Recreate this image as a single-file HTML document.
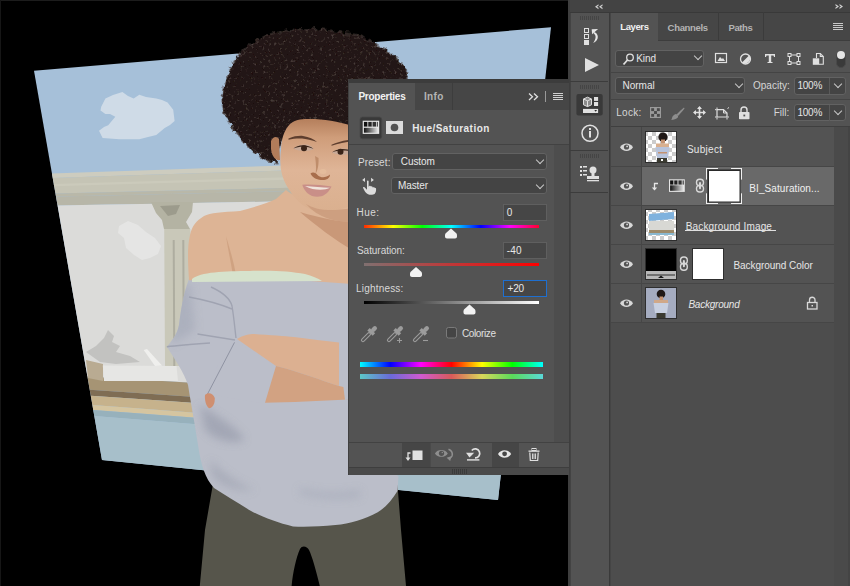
<!DOCTYPE html>
<html><head><meta charset="utf-8">
<style>
html,body{margin:0;padding:0;}
body{width:850px;height:586px;overflow:hidden;position:relative;background:#000;font-family:"Liberation Sans",sans-serif;color:#dcdcdc;}
.a{position:absolute;}
.t{position:absolute;white-space:nowrap;font-size:10px;line-height:12px;}
svg{position:absolute;left:0;top:0;overflow:visible}
.dd{position:absolute;background:#444444;border:1px solid #626262;border-radius:3px;box-sizing:border-box;}
.inp{position:absolute;background:#464646;border:1px solid #5f5f5f;box-sizing:border-box;}
.chev{position:absolute;width:5px;height:5px;border-right:1.2px solid #c8c8c8;border-bottom:1.2px solid #c8c8c8;transform:rotate(45deg);}
</style></head><body>

<!-- canvas -->
<svg width="568" height="586" viewBox="0 0 568 586" style="left:0;top:0">
<rect x="0" y="0" width="568" height="586" fill="#000"/>
<polygon points="34.0,70.7 551.0,27.2 498.0,500.0 102.0,460.0" fill="#a6c0d9"/>
<polygon points="51.9,173.5 102.3,171.7 155.1,169.9 210.6,168.0 269.0,166.1 330.5,164.0 395.4,161.7 463.9,159.4 536.5,156.9 535.8,162.4 463.5,164.7 395.2,166.9 330.5,169.0 269.2,170.9 211.0,172.8 155.6,174.6 102.9,176.3 52.7,177.9" fill="#cdccbf"/>
<polygon points="52.7,177.9 102.9,176.3 155.6,174.6 211.0,172.8 269.2,170.9 330.5,169.0 395.2,166.9 463.5,164.7 535.8,162.4 533.7,181.9 462.2,183.6 394.7,185.3 330.7,186.8 270.0,188.3 212.3,189.7 157.5,191.1 105.3,192.3 55.5,193.5" fill="#c5c4b5"/>
<polygon points="53.8,184.0 103.8,182.5 156.3,181.0 211.5,179.4 269.5,177.7 330.6,176.0 395.0,174.1 463.0,172.1 535.0,170.0 534.7,172.7 462.9,174.8 394.9,176.6 330.6,178.4 269.6,180.2 211.7,181.8 156.6,183.3 104.2,184.8 54.2,186.2" fill="#cbcabb"/>
<polygon points="55.5,193.5 105.3,192.3 157.5,191.1 212.3,189.7 270.0,188.3 330.7,186.8 394.7,185.3 462.2,183.6 533.7,181.9 533.2,185.6 462.0,187.2 394.6,188.8 330.7,190.3 270.1,191.6 212.6,193.0 157.8,194.2 105.7,195.4 56.0,196.6" fill="#b9b8a9"/>
<polygon points="56.0,196.6 105.7,195.4 157.8,194.2 212.6,193.0 270.1,191.6 330.7,190.3 394.6,188.8 462.0,187.2 533.2,185.6 532.0,196.7 461.2,198.0 394.3,199.3 330.8,200.5 270.6,201.6 213.4,202.6 158.9,203.7 107.0,204.6 57.6,205.5" fill="#b7b6a8"/>
<polygon points="57.6,205.5 107.0,204.6 158.9,203.7 213.4,202.6 270.6,201.6 330.8,200.5 394.3,199.3 461.2,198.0 532.0,196.7 508.9,402.7 447.3,398.8 388.6,395.2 332.6,391.7 279.1,388.4 228.0,385.2 179.1,382.1 132.3,379.2 87.4,376.4" fill="#dbdbd9"/>
<polygon points="87.4,376.4 132.3,379.2 179.1,382.1 228.0,385.2 279.1,388.4 332.6,391.7 388.6,395.2 447.3,398.8 508.9,402.7 507.2,418.2 446.2,414.0 388.1,410.1 332.7,406.3 279.7,402.7 229.1,399.2 180.7,395.9 134.2,392.7 89.7,389.7" fill="#a69474"/>
<polygon points="89.7,389.7 134.2,392.7 180.7,395.9 229.1,399.2 279.7,402.7 332.7,406.3 388.1,410.1 446.2,414.0 507.2,418.2 506.4,425.3 445.7,421.0 387.9,416.8 332.8,412.9 280.0,409.2 229.6,405.6 181.4,402.1 135.1,398.8 90.8,395.7" fill="#7f6d54"/>
<polygon points="90.8,395.7 135.1,398.8 181.4,402.1 229.6,405.6 280.0,409.2 332.8,412.9 387.9,416.8 445.7,421.0 506.4,425.3 505.2,436.1 445.0,431.6 387.6,427.2 332.8,423.1 280.5,419.2 230.4,415.4 182.4,411.7 136.5,408.3 92.4,404.9" fill="#c6b28c"/>
<polygon points="92.4,404.9 136.5,408.3 182.4,411.7 230.4,415.4 280.5,419.2 332.8,423.1 387.6,427.2 445.0,431.6 505.2,436.1 504.5,441.9 444.6,437.2 387.5,432.8 332.9,428.5 280.7,424.4 230.8,420.6 183.0,416.8 137.2,413.3 93.2,409.9" fill="#d5c5a0"/>
<polygon points="93.2,409.9 137.2,413.3 183.0,416.8 230.8,420.6 280.7,424.4 332.9,428.5 387.5,432.8 444.6,437.2 504.5,441.9 503.7,449.1 444.1,444.3 387.3,439.7 333.0,435.3 281.0,431.1 231.3,427.1 183.8,423.3 138.1,419.6 94.3,416.0" fill="#97b1bc"/>
<polygon points="94.3,416.0 138.1,419.6 183.8,423.3 231.3,427.1 281.0,431.1 333.0,435.3 387.3,439.7 444.1,444.3 503.7,449.1 498.0,500.0 440.6,494.2 385.8,488.7 333.4,483.4 283.2,478.3 235.1,473.4 188.9,468.8 144.6,464.3 102.0,460.0" fill="#a7bfca"/>
<path d="M101.2,106.8 L105.4,98.4 L113,95 L122.4,92 L128,96 L133.7,98.4 L139.3,94.8 L146,97 L156.3,98.4 L162,100 L167.6,102.6 L173.2,109.7 L174.6,121 L170,125 L164.7,128 L156.3,135 L148,137 L139.3,139.3 L119.5,139.3 L102.6,137.9 L99,130.8 L104,127 L108.2,125.2 L115.3,116.7 L110,114 L105.4,113.9 L100.5,110.4 Z" fill="#cfdbe7"/>
<path d="M119,226 L128,221 L138,225 L146,232 L155,238 L161,246 L158,254 L150,258 L142,260 L134,255 L126,248 L124,238 L118,233 Z" fill="#e5e5e4"/>
<path d="M151,202 L193,202 L192,212 L186,222 L190,229 L164,229 L162,220 L156,213 Z" fill="#b4b3a3"/>
<path d="M160,206 L180,205 L176,214 L168,216 Z" fill="#9c9b8c"/>
<path d="M164.2,229 L190.4,229 L191,366 L165,366 Z" fill="#c9c8b9"/>
<path d="M172.7,240 L174.7,240 L175.3,366 L173.3,366 Z M182.3,240 L184.3,240 L184.8,366 L182.8,366 Z" fill="#aeada0"/>
<path d="M86,352 L96,346 L104,338 L108,330 L114,336 L112,342 L120,346 L116,352 L130,356 L140,362 L116,364 L100,362 Z" fill="#c2c2c0"/>
<path d="M86,360 L103,364 L103,381 L88,378 Z" fill="#b9ab92"/>
<path d="M102.8,365.5 L176.5,366 L178,381 L104,380.9 Z" fill="#e6e6e4"/>
<path d="M143.7,350 L147,349 L162,365.5 L155,366 Z" fill="#efefed"/>
<!-- woman -->
<g id="woman">
 <!-- pants -->
 <path d="M214,478 L397.5,485 L401,530 L406,586 L319.8,586 C316,570 312,556 309,550 C307,546 302,545 300,549 C296,558 293,572 291.6,586 L199.8,586 L205,530 Z" fill="#56554b"/>
 <!-- sweater -->
 <defs><clipPath id="swclip"><path d="M189,279 L300,279.5 L352,283 L352,450 L398.5,476 L397.5,491 C392,500 385,508 377.7,512.3 C365,519 350,524 335.4,525 C320,526.5 305,527 293,526.4 C278,523 262,517 250.6,510.8 C238,503 225,495 214,488 C205,478 201,465 198,445 C195,425 192,410 188,385 C184,372 175,360 167,347 C172,340 177,335 179,325 C181,310 183,295 189,279 Z"/></clipPath></defs>
 <path d="M189,279 L300,279.5 L352,283 L352,450 L398.5,476 L397.5,491 C392,500 385,508 377.7,512.3 C365,519 350,524 335.4,525 C320,526.5 305,527 293,526.4 C278,523 262,517 250.6,510.8 C238,503 225,495 214,488 C205,478 201,465 198,445 C195,425 192,410 188,385 C184,372 175,360 167,347 C172,340 177,335 179,325 C181,310 183,295 189,279 Z" fill="#bbbec9"/>
 <!-- sweater shading folds -->
 <defs><filter id="soft" x="-50%" y="-50%" width="200%" height="200%"><feGaussianBlur stdDeviation="4"/></filter></defs>
 <g clip-path="url(#swclip)"><g filter="url(#soft)" opacity="0.8">
  <path d="M200,405 C215,415 235,425 245,440 C230,445 215,440 205,430 Z" fill="#9da1b0"/>
  <path d="M210,460 C225,475 240,485 255,490 C235,492 220,485 212,475 Z" fill="#a4a8b6"/>
  <path d="M300,488 C320,494 340,494 360,490 L360,497 C340,500 320,499 300,494 Z" fill="#a9adbb"/>
  <path d="M172,300 C178,290 185,285 190,282 L195,330 C188,335 178,340 172,345 Z" fill="#a9adbb"/>
 </g></g>
 <g fill="none" stroke="#9599a8" stroke-width="1.4" opacity="0.7">
  <path d="M211,287 C222,292 230,298 232,306 C234,318 235,330 236,338"/>
  <path d="M189,297 C205,300 220,304 232,309"/>
  <path d="M197.5,334 C210,336 222,338 235,340"/>
  <path d="M166.8,346.8 C180,345 195,344 210,343"/>
 </g>
 <!-- sleeve cuff -->
 <path d="M236,341 L276,366 L265,403 C245,401 225,397 207,393 C212,375 222,355 236,341 Z" fill="#bbbec9"/>
 <path d="M234.5,342.4 L207,395" stroke="#8f93a2" stroke-width="1" fill="none"/>
 <!-- forearms -->
 <path d="M237,339 C243,335 250,334 254,334 C270,335 285,336 294,337 C310,339 325,341 339,342.4 L339,386 C320,380 300,372 276,366 Z" fill="#dcb091"/>
 <path d="M276,366 C300,372 320,380 339,386 L348,388 L348,399.4 C320,401 290,402 265,402.8 Z" fill="#d2a282"/>
 <path d="M339,342.4 L352,343 L352,399 L345,400 C343,385 341,365 339,342.4 Z" fill="#bbbec9"/>
 <!-- hand -->
 <path d="M205,395 C208,392 213,393 214.8,398 C215,403 213,408 209,408.3 C206,406 204.5,400 205,395 Z" fill="#cf8f70"/>
 <!-- shoulders/chest skin -->
 <path d="M286,190 C296,200 330,205 352,200 L352,284 L300,280.2 L189,280.2 C188,262 187,248 190,235 C192,226 196,221 204,216 C210,213 222,212 240,211 C255,207 268,203 276,199 Z" fill="#ddb495"/>
 <path d="M226,236 C230,250 234,262 236,276 L233,276 C231,262 228,250 226,236 Z" fill="#c99a79" opacity="0.7"/>
 <path d="M300,212 C320,218 340,222 352,222 L352,250 C335,240 315,225 300,212 Z" fill="#c99878"/>
 <!-- bra strap -->
 <path d="M192,279 C200,272 225,271 250,271 C270,270 290,271 305,274 C312,276 318,278 322,281 L192,282 Z" fill="#d6e2cc"/>
 <!-- hair -->
 <defs>
  <filter id="curl" x="-10%" y="-10%" width="120%" height="120%">
   <feTurbulence type="fractalNoise" baseFrequency="0.18" numOctaves="2" seed="3" result="n"/>
   <feDisplacementMap in="SourceGraphic" in2="n" scale="6" xChannelSelector="R" yChannelSelector="G" result="d"/>
   <feTurbulence type="fractalNoise" baseFrequency="0.35" numOctaves="2" seed="7" result="n2"/>
   <feColorMatrix in="n2" type="matrix" values="0 0 0 0 0.23  0 0 0 0 0.18  0 0 0 0 0.16  0.9 0 0 0 -0.52" result="tex"/>
   <feComposite in="tex" in2="d" operator="in" result="tex2"/>
   <feMerge><feMergeNode in="d"/><feMergeNode in="tex2"/></feMerge>
  </filter>
 </defs>
 <path filter="url(#curl)" d="M289.3,30.2 C300,29 305,29 312.3,29 C320,29 328,30 335.4,31.5 C345,33 352,34 358.4,35.4 C366,38 371,41 376.3,44.3 C382,48 387,50 391.7,53.3 C397,58 400,62 403.2,66.1 C406,71 407.5,75 408.3,80 L352,80 L352,135 L300,135 L282,140 L278,150 L276.5,163.4 C272,162 269,161 266.2,159.6 C262,157 257,154 253.4,150.6 C247,145 242,140 238,135.2 C233,129 229,123 226.5,117.3 C224,112 223,108 222.7,104.5 C222,98 222.5,92 224,86.6 C226,80 228,74 230.4,68.7 C234,62 237,57 240.6,53.3 C245,48 250,44 256,40.5 C261,38 266,36 271.3,34 C277,32 283,31 289.3,30.2 Z" fill="#211916"/>
 <path filter="url(#curl)" d="M289.3,30.2 C300,29 305,29 312.3,29 C320,29 328,30 335.4,31.5 C345,33 352,34 358.4,35.4 C366,38 371,41 376.3,44.3 C382,48 387,50 391.7,53.3 C397,58 400,62 403.2,66.1 C406,71 407.5,75 408.3,80 L352,80 L352,135 L300,135 L282,140 L278,150 L276.5,163.4 C272,162 269,161 266.2,159.6 C262,157 257,154 253.4,150.6 C247,145 242,140 238,135.2 C233,129 229,123 226.5,117.3 C224,112 223,108 222.7,104.5 C222,98 222.5,92 224,86.6 C226,80 228,74 230.4,68.7 C234,62 237,57 240.6,53.3 C245,48 250,44 256,40.5 C261,38 266,36 271.3,34 C277,32 283,31 289.3,30.2 Z" fill="none" stroke="#4a3d3a" stroke-width="2.2" opacity="0.55" stroke-dasharray="5 3"/>
 <!-- face -->
 <defs>
  <linearGradient id="faceg" x1="0" y1="0" x2="0" y2="1">
   <stop offset="0" stop-color="#b57f5c"/><stop offset="0.2" stop-color="#cf9d7a"/><stop offset="0.55" stop-color="#dfb597"/><stop offset="1" stop-color="#dab08f"/>
  </linearGradient>
 </defs>
 <path d="M281,150 C281,140 284,130 290,124 C294,121 297,120 300,119.5 C315,118 335,120 352,126 L352,206 C342,209 330,212 318,212 C306,209 296,201 290,191 C284,182 281,174 280.5,165 C280,158 280.5,154 281,150 Z" fill="url(#faceg)"/>
 <path d="M306,204 C315,210 330,212 352,208 L352,222 C335,222 318,218 306,204 Z" fill="#c99a7a" opacity="0.8"/>
 <path d="M271,141 C273,136 277,136 279,139 L280,160 C276,161 272,157 271,149 Z" fill="#b27c5a"/>
 <!-- brows eyes nose mouth -->
 <path d="M288.5,138.5 C294,136 300,135.5 303,136 C309,137 314,139 317,142 C312,140.5 306,139 302,138.6 C297,138.4 292,139 288.5,139.8 Z" fill="#5e3e2e"/>
 <path d="M331.5,144.8 C336,142.5 342,141 348,140 L352,139.8 L352,141.5 C346,142 338,143.5 331.5,145.8 Z" fill="#5e3e2e"/>
 <path d="M293.5,148.5 C297,144.8 303,144 307,144.6 C310,145.2 312.5,147 313.5,149 C310,151.5 300,152 293.5,148.5 Z" fill="#c8aa98"/>
 <circle cx="304" cy="148.3" r="3" fill="#3a2418"/>
 <path d="M293.5,148.5 C297,144.5 308,143.5 313.5,149 C308,146 299,146 293.5,148.5 Z" fill="#3a2418"/>
 <path d="M332,152.5 C335.5,149 341,148 345,148.6 C348,149.2 350.5,150.5 352,152 L352,153.5 C346,155.5 337,155.2 332,152.5 Z" fill="#c8aa98"/>
 <circle cx="340.5" cy="151.8" r="3" fill="#3a2418"/>
 <path d="M332,152.5 C336,148.5 346,147.5 352,151.5 C346,150 337,150 332,152.5 Z" fill="#3a2418"/>
 <path d="M315,156 C316,163 316.5,170 315.5,174 C317,172 319,166 318.5,158 Z" fill="#b88462" opacity="0.8"/>
 <path d="M310.5,173.5 C313,171.5 316,173 318,175.5 C321,178 326,178 330,174.5 C330,178.5 326,180.5 321,180 C316,179.5 312,177 310.5,173.5 Z" fill="#a86e4c"/>
 <ellipse cx="323" cy="171.5" rx="3.5" ry="2.5" fill="#e4bc9c"/>
 <path d="M302.3,184.8 C310,184 322,185 331.5,186.5 C327,196 320,198 312,196 C307,194 304,190 302.3,184.8 Z" fill="#c98f88"/>
 <path d="M305,186 C313,186.5 322,187.5 330,187.8 C325,190.5 314,191 305,186 Z" fill="#f0e4dc"/>
</g>
</svg>

<!-- dock left border -->
<div class="a" style="left:0;top:0;width:568px;height:1px;background:#1c1c1c"></div>
<div class="a" style="left:0;top:0;width:1px;height:586px;background:#161616"></div>
<div class="a" style="left:568px;top:0;width:2.5px;height:586px;background:#3e3e3e"></div>
<!-- dock -->
<div class="a" style="left:570px;top:0;width:280px;height:586px;background:#434343"></div>
<!-- top bar -->
<div class="a" style="left:570px;top:0;width:280px;height:12px;background:#434343"></div>
<div class="a" style="left:570px;top:12px;width:280px;height:1px;background:#393939"></div>
<svg width="850" height="586"><path d="M595,6.8 L598.5,4.3 L598.5,5.8 L597,6.8 L598.5,7.8 L598.5,9.3 Z M599,6.8 L602.5,4.3 L602.5,5.8 L601,6.8 L602.5,7.8 L602.5,9.3 Z" fill="#d0d0d0"/>
<path d="M843,6.5 L839.5,4 L839.5,5.5 L841,6.5 L839.5,7.5 L839.5,9 Z M839,6.5 L835.5,4 L835.5,5.5 L837,6.5 L835.5,7.5 L835.5,9 Z" fill="#d0d0d0"/></svg>


<!-- icon column -->
<div class="a" style="left:570.5px;top:13px;width:38px;height:573px;background:#535353"></div>
<div class="a" style="left:570px;top:81px;width:38px;height:1px;background:#3c3c3c"></div>
<div class="a" style="left:570px;top:150px;width:38px;height:1px;background:#3c3c3c"></div>
<div class="a" style="left:570px;top:192px;width:38px;height:1px;background:#3c3c3c"></div>
<!-- grips -->
<div class="a" style="left:580px;top:16px;width:19px;height:4px;background:repeating-linear-gradient(90deg,#454545 0 1px,transparent 1px 2px)"></div>
<div class="a" style="left:580px;top:85px;width:19px;height:4px;background:repeating-linear-gradient(90deg,#454545 0 1px,transparent 1px 2px)"></div>
<div class="a" style="left:580px;top:154px;width:19px;height:4px;background:repeating-linear-gradient(90deg,#454545 0 1px,transparent 1px 2px)"></div>
<!-- history icon -->
<svg width="850" height="586">
 <rect x="584.5" y="28.5" width="4" height="4" fill="none" stroke="#e0e0e0" stroke-width="1"/>
 <rect x="584.5" y="34.5" width="4" height="4" fill="none" stroke="#e0e0e0" stroke-width="1"/>
 <rect x="584" y="40" width="5" height="5" fill="#e0e0e0"/>
 <path d="M591.7,29.3 L598.1,29.1 L592.1,34.2 Z" fill="#e6e6e6"/>
 <path d="M594.5,32 C597.5,33.5 598.3,36 597.6,38.5 C597,40.5 595,42 593.2,43 C594.5,41 595.6,39 595.6,37 C595.6,35.5 594.8,34.2 593.5,33.3 Z" fill="#e6e6e6"/>
 <path d="M585,58 L599,65 L585,72 Z" fill="#e0e0e0"/>
 <!-- properties button -->
 <rect x="576.4" y="94.1" width="26.3" height="21.5" rx="2" fill="#393939"/>
 <path d="M583.5,99 L587.5,97.2 L591.5,99 L591.5,104.8 L587.5,106.6 L583.5,104.8 Z" fill="#8a8a8a" stroke="#e0e0e0" stroke-width="1"/>
 <path d="M583.5,99 L587.5,100.8 L591.5,99 M587.5,100.8 L587.5,106.6" fill="none" stroke="#e0e0e0" stroke-width="1"/>
 <rect x="594" y="97" width="4.1" height="3.9" fill="#e0e0e0"/>
 <rect x="594" y="102" width="4.1" height="4" fill="#e0e0e0"/>
 <rect x="583" y="108.9" width="15.1" height="4.1" fill="#e0e0e0"/>
 <path d="M594.3,110 L597,110 L595.65,111.8 Z" fill="#2a2a2a"/>
 <!-- info -->
 <circle cx="590" cy="133.3" r="8" fill="none" stroke="#e0e0e0" stroke-width="1.5"/>
 <rect x="589" y="131" width="2" height="6.5" fill="#e0e0e0"/>
 <rect x="589" y="128" width="2" height="2" fill="#e0e0e0"/>
 <!-- clone source -->
 <rect x="580" y="166" width="2" height="2" fill="#e0e0e0"/><rect x="583" y="166" width="4" height="1.5" fill="#e0e0e0"/>
 <rect x="580" y="170" width="2" height="2" fill="#e0e0e0"/><rect x="583" y="170" width="4" height="1.5" fill="#e0e0e0"/>
 <rect x="580" y="174" width="2" height="2" fill="#e0e0e0"/><rect x="583" y="174" width="4" height="1.5" fill="#e0e0e0"/>
 <circle cx="593" cy="170" r="3.5" fill="#e0e0e0"/>
 <rect x="591.5" y="172" width="3" height="5" fill="#e0e0e0"/>
 <rect x="587" y="176" width="12" height="3" fill="#e0e0e0"/>
 <rect x="587" y="180" width="12" height="1.3" fill="#e0e0e0"/>
</svg>

<!-- divider between column and layers panel -->
<div class="a" style="left:608.5px;top:13px;width:1.5px;height:573px;background:#3a3a3a"></div><div class="a" style="left:610px;top:13px;width:1px;height:573px;background:#454545"></div>

<!-- LAYERS PANEL -->
<div class="a" style="left:611px;top:13px;width:239px;height:573px;background:#535353"></div>
<div class="a" style="left:658px;top:13px;width:192px;height:27px;background:#464646"></div>
<div class="a" style="left:718px;top:12px;width:1px;height:28px;background:#3b3b3b"></div>
<div class="a" style="left:763px;top:12px;width:1px;height:28px;background:#3b3b3b"></div>
<div class="a" style="left:658px;top:40px;width:192px;height:1px;background:#3d3d3d"></div>
<div class="a" style="left:833px;top:23px;width:10px;height:7px;background:repeating-linear-gradient(180deg,#c8c8c8 0 1px,transparent 1px 2px)"></div>

<!-- kind row -->
<div class="dd" style="left:615px;top:50px;width:89px;height:17px"></div>
<svg width="850" height="586">
 <circle cx="630" cy="57.5" r="3.3" fill="none" stroke="#e0e0e0" stroke-width="1.3"/>
 <path d="M627.5,60 L623.5,64.5" stroke="#e0e0e0" stroke-width="1.8"/>
</svg>
<div class="chev" style="left:695px;top:53.3px"></div>
<svg width="850" height="586">
 <rect x="715.5" y="53.5" width="11" height="9" fill="none" stroke="#e0e0e0" stroke-width="1.2"/>
 <path d="M717.5,61 L720,57 L722,59 L723,58 L725,61 Z" fill="#e0e0e0"/>
 <circle cx="745.5" cy="59" r="5" fill="none" stroke="#e0e0e0" stroke-width="1.3"/>
 <path d="M749,55.5 L742,62.5 A5,5 0 0 0 749,55.5 Z" fill="#e0e0e0"/>
 <path d="M765,54 L775,54 L775,57 L774,57 L773.5,55.5 L771.2,55.5 L771.2,62 L772.5,62 L772.5,63 L767.5,63 L767.5,62 L768.8,62 L768.8,55.5 L766.5,55.5 L766,57 L765,57 Z" fill="#e0e0e0"/>
 <rect x="789.5" y="55" width="9" height="8" fill="none" stroke="#e0e0e0" stroke-width="1"/>
 <rect x="788" y="53.5" width="3" height="3" fill="#535353" stroke="#e0e0e0" stroke-width="1"/>
 <rect x="797" y="53.5" width="3" height="3" fill="#535353" stroke="#e0e0e0" stroke-width="1"/>
 <rect x="788" y="61.5" width="3" height="3" fill="#535353" stroke="#e0e0e0" stroke-width="1"/>
 <rect x="797" y="61.5" width="3" height="3" fill="#535353" stroke="#e0e0e0" stroke-width="1"/>
 <path d="M816.5,58 L816.5,53.5 L820.3,53.5 L823.3,56.5 L823.3,64.3 L819,64.3" fill="none" stroke="#e0e0e0" stroke-width="1.1"/>
 <path d="M820.3,53.5 L820.3,56.5 L823.3,56.5" fill="none" stroke="#e0e0e0" stroke-width="1.1"/>
 <rect x="812.8" y="58.3" width="6.4" height="6.5" fill="#e0e0e0"/>
 <rect x="836.5" y="52" width="9" height="15.5" rx="4.5" fill="#3a3a3a" stroke="#494949" stroke-width="1"/>
 <circle cx="841" cy="55" r="4" fill="#e6e6e6"/>
</svg>
<div class="a" style="left:611px;top:72px;width:239px;height:1px;background:#444"></div>

<!-- blend row -->
<div class="dd" style="left:615px;top:77px;width:130px;height:17px"></div>
<div class="chev" style="left:736px;top:80.5px"></div>
<div class="dd" style="left:794px;top:77px;width:51.5px;height:17.5px"></div>
<div class="a" style="left:829px;top:78px;width:1px;height:16px;background:#5a5a5a"></div>
<div class="chev" style="left:835px;top:80.5px"></div>
<div class="a" style="left:611px;top:99px;width:239px;height:1px;background:#444"></div>

<!-- lock row -->
<svg width="850" height="586">
 <rect x="650" y="107" width="11" height="11" fill="#9a9a9a"/>
 <rect x="651.2" y="108.2" width="2.9" height="2.9" fill="#4a4a4a"/><rect x="656.9" y="108.2" width="2.9" height="2.9" fill="#4a4a4a"/>
 <rect x="654.05" y="111.05" width="2.9" height="2.9" fill="#4a4a4a"/>
 <rect x="651.2" y="113.9" width="2.9" height="2.9" fill="#4a4a4a"/><rect x="656.9" y="113.9" width="2.9" height="2.9" fill="#4a4a4a"/>
 <path d="M684,107.5 C682,109 678.5,112.5 676.5,114.5 L678,116 C680,114 683,110.5 684.5,108.5 Z" fill="#8e8e8e"/>
 <path d="M676,114 C674,114.5 672.5,116 672,118 C671.8,119 671.6,119.6 671.2,120 C673.5,120 676.5,119 677.8,117.5 C678.5,116.5 678,115 676,114 Z" fill="#8e8e8e"/>
 <path d="M699.5,107 L699.5,118 M694,112.5 L705,112.5" stroke="#e0e0e0" stroke-width="1.6"/>
 <path d="M697,109 L699.5,106 L702,109 Z M697,116 L699.5,119 L702,116 Z M696,110 L693,112.5 L696,115 Z M703,110 L706,112.5 L703,115 Z" fill="#e0e0e0"/>
 <path d="M717,109.7 L723.5,109.7 L727,113 L727,117 L717,117 Z" fill="none" stroke="#e0e0e0" stroke-width="1.2"/>
 <path d="M723.5,109.7 L723.5,113 L727,113" fill="none" stroke="#e0e0e0" stroke-width="1"/>
 <path d="M715,109.7 L716.5,109.7 M717,107.5 L717,109 M715,117 L716.5,117 M717,117.5 L717,119.5 M727,117.5 L727,119.5 M727.5,117 L729,117 M727.5,108.5 L729,107.5" stroke="#e0e0e0" stroke-width="1"/>
 <path d="M741,112.5 L741,110 A3,3 0 0 1 747,110 L747,112.5" fill="none" stroke="#e0e0e0" stroke-width="1.4"/>
 <rect x="739" y="112" width="10.5" height="7.2" rx="0.8" fill="#e0e0e0"/>
 <rect x="743.4" y="114.6" width="1.8" height="1.8" fill="#535353"/>
</svg>
<div class="dd" style="left:794px;top:103.5px;width:51.5px;height:17.5px"></div>
<div class="a" style="left:829px;top:104.5px;width:1px;height:16px;background:#5a5a5a"></div>
<div class="chev" style="left:835px;top:107.5px"></div>

<!-- layer list -->
<div class="a" style="left:611px;top:126px;width:239px;height:1px;background:#3f3f3f"></div>
<div class="a" style="left:834px;top:127px;width:16px;height:459px;background:#4a4a4a"></div>
<div class="a" style="left:848px;top:127px;width:2px;height:459px;background:#444"></div>
<div class="a" style="left:611px;top:322px;width:223px;height:264px;background:#4d4d4d"></div>
<!-- selected row -->
<div class="a" style="left:642px;top:167px;width:192px;height:38px;background:#696969"></div>
<!-- row separators -->
<div class="a" style="left:611px;top:166px;width:223px;height:1px;background:#464646"></div>
<div class="a" style="left:611px;top:205px;width:223px;height:1px;background:#464646"></div>
<div class="a" style="left:611px;top:244px;width:223px;height:1px;background:#464646"></div>
<div class="a" style="left:611px;top:283px;width:223px;height:1px;background:#464646"></div>
<div class="a" style="left:611px;top:322px;width:223px;height:1px;background:#464646"></div>
<div class="a" style="left:641px;top:127px;width:1px;height:195px;background:#464646"></div>

<svg width="850" height="586">
 <defs>
  <pattern id="chk" width="8" height="8" patternUnits="userSpaceOnUse"><rect width="8" height="8" fill="#fff"/><rect width="4" height="4" fill="#cccccc"/><rect x="4" y="4" width="4" height="4" fill="#cccccc"/></pattern>
  <g id="eye"><path d="M-6.5,0 C-3.5,-5 3.5,-5 6.5,0 C3.5,5 -3.5,5 -6.5,0 Z" fill="#d8d8d8"/><circle cx="0" cy="-0.3" r="2.6" fill="#535353"/><circle cx="0.6" cy="-0.9" r="0.9" fill="#d8d8d8"/></g>
 </defs>
 <use href="#eye" x="626.5" y="147.3"/>
 <use href="#eye" x="626.5" y="186.3"/>
 <use href="#eye" x="626.5" y="225.3"/>
 <use href="#eye" x="626.5" y="264.3"/>
 <use href="#eye" x="626.5" y="303.3"/>
 <!-- thumb 1 subject -->
 <rect x="645.5" y="131.5" width="31" height="31" fill="url(#chk)" stroke="#2e2e2e" stroke-width="1"/>
 <circle cx="663" cy="137" r="4.6" fill="#1f1816"/>
 <rect x="661" y="139.5" width="4" height="4" fill="#c49270"/>
 <path d="M656,143.5 L669,143.5 L669,147 L656,147 Z" fill="#d8b090"/>
 <path d="M655.5,147 L669.5,147 L668,158 L657,158 Z" fill="#b8c4dc"/>
 <rect x="658" y="152" width="9" height="1.5" fill="#c49270"/>
 <rect x="657" y="158" width="10" height="4.5" fill="#3a3a30"/>
 <rect x="661" y="159" width="2" height="2" fill="#fff"/>
 <!-- row2 -->
 <path d="M654.5,189 L654.5,183.5 L658,183.5" stroke="#e6e6e6" stroke-width="1.3" fill="none"/>
 <path d="M651.8,187.5 L657.2,187.5 L654.5,190.5 Z" fill="#e6e6e6"/>
 <rect x="669" y="179.3" width="15.8" height="12.6" fill="#e6e6e6"/>
 <rect x="670.1" y="185.3" width="13.6" height="5.5" fill="url(#grad2)"/>
 <rect x="670.1" y="180.4" width="3.3" height="4.2" fill="#111"/><rect x="673.4" y="180.4" width="0.9" height="4.2" fill="#999"/>
 <rect x="674.3" y="180.4" width="3.3" height="4.2" fill="#222"/><rect x="677.6" y="180.4" width="0.9" height="4.2" fill="#aaa"/>
 <rect x="678.5" y="180.4" width="3.3" height="4.2" fill="#333"/><rect x="681.8" y="180.4" width="0.9" height="4.2" fill="#bbb"/>
 <rect x="682.7" y="180.4" width="1.1" height="4.2" fill="#444"/>
 <rect x="696.5" y="179.2" width="7" height="6.6" rx="3.2" fill="none" stroke="#d8d8d8" stroke-width="1.4"/>
 <rect x="696.5" y="185.4" width="7" height="6.6" rx="3.2" fill="none" stroke="#d8d8d8" stroke-width="1.4"/>
 <rect x="699" y="182" width="2" height="7.2" rx="1" fill="#d8d8d8"/>
 <rect x="706.5" y="168.5" width="35" height="35" fill="none" stroke="#f0f0f0" stroke-width="1"/>
 <rect x="718" y="168" width="13" height="2" fill="#696969"/>
 <rect x="718" y="202" width="13" height="2" fill="#696969"/>
 <rect x="706" y="179.6" width="2" height="13.7" fill="#696969"/>
 <rect x="741" y="179.6" width="2" height="13.7" fill="#696969"/>
 <rect x="707.5" y="169.5" width="33" height="33" fill="#2a2a2a"/>
 <rect x="709" y="171" width="30.5" height="30.5" fill="#ffffff"/>
 <!-- thumb 3 background image -->
 <rect x="645.5" y="209.5" width="31" height="31" fill="url(#chk)" stroke="#2e2e2e" stroke-width="1"/>
 <path d="M649,214 L674,212 L674,219 L649,221 Z" fill="#7fb2de"/>
 <rect x="649" y="221" width="25" height="9" fill="#d8d8d4"/>
 <rect x="649" y="230" width="25" height="3" fill="#9c8a6a"/>
 <rect x="649" y="233" width="25" height="2" fill="#89b8d0"/>
 <!-- thumb 4 bg color -->
 <rect x="645.5" y="248.5" width="31" height="31" fill="#000" stroke="#2e2e2e" stroke-width="1"/>
 <rect x="646" y="271" width="30" height="8" fill="#b8b8b8"/>
 <rect x="647" y="274.5" width="28" height="1" fill="#2a2a2a"/>
 <path d="M658,278 L661,275.5 L664,278 Z" fill="#1a1a1a"/>
 <rect x="680.5" y="257" width="6.8" height="6.9" rx="3.2" fill="none" stroke="#d8d8d8" stroke-width="1.4"/>
 <rect x="680.5" y="263.3" width="6.8" height="6.9" rx="3.2" fill="none" stroke="#d8d8d8" stroke-width="1.4"/>
 <rect x="682.9" y="260" width="2" height="7.2" rx="1" fill="#d8d8d8"/>
 <rect x="692.5" y="248.5" width="31" height="31" fill="#fff" stroke="#2e2e2e" stroke-width="1"/>
 <!-- thumb 5 background -->
 <rect x="645.5" y="287.5" width="31" height="31" fill="#a5acc0" stroke="#2e2e2e" stroke-width="1"/>
 <circle cx="661" cy="294" r="4.3" fill="#1f1816"/>
 <rect x="659.5" y="296.5" width="3.5" height="3.5" fill="#c49270"/>
 <path d="M654,300 L668,300 L668,303 L654,303 Z" fill="#d0a888"/>
 <path d="M653.5,303 L668.5,303 L667,313 L655,313 Z" fill="#c8d0e0"/>
 <rect x="656.5" y="313" width="9" height="5" fill="#3a3a30"/>
 <!-- lock -->
 <path d="M809.5,302 L809.5,300 A2.7,2.7 0 0 1 815,300 L815,302" fill="none" stroke="#d8d8d8" stroke-width="1.3"/>
 <rect x="807.5" y="302.5" width="9.5" height="6.5" fill="none" stroke="#d8d8d8" stroke-width="1.3"/>
 <rect x="811.5" y="305" width="1.5" height="1.5" fill="#d8d8d8"/>
</svg>

<!-- PROPERTIES PANEL -->
<div class="a" style="left:348px;top:79px;width:221px;height:396px;background:#535353"></div>
<div class="a" style="left:348px;top:79px;width:221px;height:31px;background:#464646"></div>
<div class="a" style="left:348px;top:79px;width:221px;height:4px;background:#3c3c3c"></div>
<div class="a" style="left:348px;top:83px;width:67px;height:27px;background:#535353"></div>
<div class="a" style="left:348px;top:79px;width:1px;height:396px;background:#404040"></div>
<div class="a" style="left:452px;top:83px;width:1px;height:27px;background:#3d3d3d"></div>
<svg width="850" height="586"><path d="M529,93.5 L532.5,96.7 L529,99.9 M534,93.5 L537.5,96.7 L534,99.9" fill="none" stroke="#e0e0e0" stroke-width="1.3"/></svg>
<div class="a" style="left:545px;top:91px;width:1px;height:11px;background:#9a9a9a"></div>
<div class="a" style="left:553px;top:93px;width:10px;height:8px;background:repeating-linear-gradient(180deg,#d0d0d0 0 1px,transparent 1px 2px)"></div>

<svg width="850" height="586">
 <rect x="360" y="117" width="21.7" height="21.8" rx="2.5" fill="#393939" stroke="#474747" stroke-width="0.8"/>
 <rect x="362.7" y="120.7" width="16.5" height="13.2" fill="#e6e6e6"/>
 <linearGradient id="grad2" x1="0" x2="1"><stop offset="0" stop-color="#111"/><stop offset="1" stop-color="#e8e8e8"/></linearGradient>
 <linearGradient id="grad3" x1="0" x2="1" spreadMethod="repeat"><stop offset="0" stop-color="#0a0a0a"/><stop offset="0.6" stop-color="#3a3a3a"/><stop offset="1" stop-color="#b0b0b0"/></linearGradient>
 <rect x="363.9" y="127.8" width="14.1" height="4.9" fill="url(#grad2)"/>
 <rect x="363.9" y="121.9" width="3.5" height="4.7" fill="#111"/><rect x="367.4" y="121.9" width="0.9" height="4.7" fill="#999"/>
 <rect x="368.3" y="121.9" width="3.5" height="4.7" fill="#222"/><rect x="371.8" y="121.9" width="0.9" height="4.7" fill="#aaa"/>
 <rect x="372.7" y="121.9" width="3.5" height="4.7" fill="#333"/><rect x="376.2" y="121.9" width="0.9" height="4.7" fill="#bbb"/>
 <rect x="377.1" y="121.9" width="0.9" height="4.7" fill="#444"/>
 <rect x="386" y="121" width="17" height="13" fill="#dcdcdc"/>
 <circle cx="394.5" cy="127.5" r="3.8" fill="#535353"/>
</svg>
<div class="a" style="left:349px;top:144px;width:220px;height:1px;background:#424242"></div>
<!-- scroll strip -->
<div class="a" style="left:554px;top:145px;width:15px;height:297px;background:#4d4d4d"></div>

<div class="dd" style="left:392px;top:153px;width:155px;height:17px"></div>
<div class="chev" style="left:537px;top:157px"></div>
<div class="dd" style="left:391px;top:177px;width:156px;height:17px"></div>
<div class="chev" style="left:537px;top:181.5px"></div>
<svg width="850" height="586">
 <path d="M362.2,179.9 L365,177.8 L365,182 Z M373.9,179.9 L371.1,177.8 L371.1,182 Z" fill="#dcdcdc"/>
 <path d="M367,181 C367,180.3 368.6,180.3 368.6,181 L368.6,186.8 L369.3,186 C369.6,185.5 370.6,185.5 370.8,186.2 L371,186.8 C371.3,186.2 372.3,186.2 372.5,186.9 L372.7,187.5 C373,187 374.2,187 374.3,187.6 L376,188.3 C376.3,190 376,192.5 374.8,193.8 C373.5,194.8 371.5,194.9 369.5,194.7 C367.5,194.4 366,193 364.8,191.2 L363.1,188 C362.8,187.2 363.8,186.6 364.5,187.3 L367,189.8 Z" fill="#dcdcdc"/>
</svg>

<div class="inp" style="left:503px;top:204px;width:44px;height:16.5px"></div>
<div class="a" style="left:364px;top:225px;width:175px;height:3.2px;background:linear-gradient(90deg,#ff2a00 0%,#ffff00 16.7%,#00ff00 33.3%,#00ffff 50%,#0000ff 66.7%,#ff00ff 83.3%,#ff0030 100%)"></div>

<div class="inp" style="left:503px;top:242px;width:44px;height:16.5px"></div>
<div class="a" style="left:364px;top:263px;width:175px;height:3px;background:linear-gradient(90deg,#807070,#ff0000)"></div>

<div class="inp" style="left:503px;top:280px;width:44px;height:17px;border-color:#1e6fd0;border-width:1.5px"></div>
<div class="a" style="left:364px;top:301px;width:175px;height:3px;background:linear-gradient(90deg,#000,#ffffff)"></div>

<svg width="850" height="586">
 <defs><path id="thumb" d="M0,0 L5,4.5 C5.8,5.3 6,6 6,7 L6,8 C6,9.2 5.2,10 4,10 L-4,10 C-5.2,10 -6,9.2 -6,8 L-6,7 C-6,6 -5.8,5.3 -5,4.5 Z" fill="#f2f2f2"/></defs>
 <use href="#thumb" x="451" y="228.5"/>
 <use href="#thumb" x="416" y="267"/>
 <use href="#thumb" x="469.5" y="304.5"/>
 <g transform="translate(371.3,331.8) rotate(45)">
  <rect x="-2.2" y="-7.2" width="4.4" height="6.5" rx="2.2" fill="#9c9c9c"/>
  <rect x="-3.8" y="-1.6" width="7.6" height="3.4" fill="#9c9c9c"/>
  <rect x="-1.5" y="1.8" width="3" height="11.5" rx="1.5" fill="none" stroke="#9c9c9c" stroke-width="1.1"/>
 </g>
 <g transform="translate(397.3,331.8) rotate(45)">
  <rect x="-2.2" y="-7.2" width="4.4" height="6.5" rx="2.2" fill="#9c9c9c"/>
  <rect x="-3.8" y="-1.6" width="7.6" height="3.4" fill="#9c9c9c"/>
  <rect x="-1.5" y="1.8" width="3" height="11.5" rx="1.5" fill="none" stroke="#9c9c9c" stroke-width="1.1"/>
 </g>
 <g transform="translate(423.3,331.8) rotate(45)">
  <rect x="-2.2" y="-7.2" width="4.4" height="6.5" rx="2.2" fill="#9c9c9c"/>
  <rect x="-3.8" y="-1.6" width="7.6" height="3.4" fill="#9c9c9c"/>
  <rect x="-1.5" y="1.8" width="3" height="11.5" rx="1.5" fill="none" stroke="#9c9c9c" stroke-width="1.1"/>
 </g>
 <path d="M399.5,338 L399.5,343 M397,340.5 L402,340.5" stroke="#9c9c9c" stroke-width="1.1"/>
 <path d="M423,340.5 L428,340.5" stroke="#9c9c9c" stroke-width="1.1"/>
 <rect x="446.5" y="327.5" width="10" height="10.5" rx="2" fill="#454545" stroke="#7a7a7a" stroke-width="1"/>
</svg>
<div class="a" style="left:360px;top:362px;width:183px;height:5px;background:linear-gradient(90deg,#00ffff 0%,#0000ff 16.7%,#ff00ff 33.3%,#ff0000 50%,#ffff00 66.7%,#00ff00 83.3%,#00ffff 100%)"></div>
<div class="a" style="left:360px;top:374px;width:183px;height:5px;background:linear-gradient(90deg,#5cc8c8 0%,#6a6ad8 16.7%,#d05ad0 33.3%,#d85a5a 50%,#d8d85a 66.7%,#5ad85a 83.3%,#5ad8d8 100%)"></div>

<!-- bottom toolbar -->
<div class="a" style="left:349px;top:442px;width:220px;height:1px;background:#424242"></div>
<div class="a" style="left:402px;top:443px;width:27.5px;height:24px;background:#464646"></div>
<div class="a" style="left:492px;top:443px;width:27px;height:24px;background:#464646"></div>
<div class="a" style="left:430px;top:443px;width:1px;height:24px;background:#4a4a4a"></div>
<div class="a" style="left:349px;top:467px;width:220px;height:1px;background:#3e3e3e"></div>
<div class="a" style="left:349px;top:468px;width:220px;height:7px;background:#4a4a4a"></div>
<div class="a" style="left:452px;top:469px;width:16px;height:5px;background:repeating-linear-gradient(90deg,#3a3a3a 0 1px,transparent 1px 2px)"></div>
<svg width="850" height="586">
 <rect x="412.5" y="450.5" width="10" height="9.5" fill="#e0e0e0"/>
 <path d="M410.5,453 L408,453 L408,460" fill="none" stroke="#e0e0e0" stroke-width="1.3"/>
 <path d="M405.5,457.5 L408,461 L410.5,457.5 Z" fill="#e0e0e0"/>
 <!-- view previous (dim) -->
 <path d="M434.9,453.4 C437.5,448.8 445.2,448.8 447.8,453.4 C445.2,458 437.5,458 434.9,453.4 Z" fill="#8e8e8e"/>
 <circle cx="441.5" cy="453.3" r="2.6" fill="#535353"/>
 <circle cx="442.3" cy="452.5" r="0.7" fill="#8e8e8e"/>
 <path d="M448.5,449.2 C451.8,450.5 453,453.5 452,456 C451.4,457.3 450.5,458 449.6,458.5" fill="none" stroke="#8e8e8e" stroke-width="1.6"/>
 <path d="M446.6,457.8 L451.2,456.2 L450.2,461 Z" fill="#8e8e8e"/>
 <!-- reset -->
 <path d="M471.8,450.5 A4.5,4.5 0 1 1 475,457.9" fill="none" stroke="#e0e0e0" stroke-width="1.7"/>
 <path d="M466,452.8 L474.2,452.8 L469.5,457.6 Z" fill="#e0e0e0"/>
 <rect x="467" y="459.2" width="12.4" height="1.4" fill="#e0e0e0"/>
 <!-- eye -->
 <path d="M498,454 C501,449 508,449 511.2,454 C508,459 501,459 498,454 Z" fill="#e6e6e6"/>
 <circle cx="504.6" cy="453.8" r="2.4" fill="#464646"/>
 <!-- trash -->
 <rect x="528.5" y="450.5" width="11" height="1.3" fill="#e0e0e0"/>
 <rect x="532" y="448.5" width="4" height="2" fill="none" stroke="#e0e0e0" stroke-width="1"/>
 <path d="M529.8,452.5 L530.3,460.5 L537.7,460.5 L538.2,452.5" fill="none" stroke="#e0e0e0" stroke-width="1.2"/>
 <path d="M532.5,453.5 L532.5,459 M534,453.5 L534,459 M535.5,453.5 L535.5,459" stroke="#e0e0e0" stroke-width="0.9"/>
</svg>

<div class="t" style="left:358.40px;top:92.33px;font-size:10px;line-height:10px;font-weight:bold;font-style:normal;color:#f2f2f2;letter-spacing:-0.233px;">Properties</div>
<div class="t" style="left:423.90px;top:92.33px;font-size:10px;line-height:10px;font-weight:bold;font-style:normal;color:#b4b4b4;letter-spacing:0.367px;">Info</div>
<div class="t" style="left:412.20px;top:124.03px;font-size:10px;line-height:10px;font-weight:bold;font-style:normal;color:#e8e8e8;letter-spacing:0.462px;">Hue/Saturation</div>
<div class="t" style="left:358.00px;top:158.34px;font-size:10px;line-height:10px;font-weight:normal;font-style:normal;color:#d8d8d8;letter-spacing:0.133px;">Preset:</div>
<div class="t" style="left:400.80px;top:157.34px;font-size:10px;line-height:10px;font-weight:normal;font-style:normal;color:#e8e8e8;letter-spacing:-0.100px;">Custom</div>
<div class="t" style="left:398.00px;top:181.23px;font-size:10px;line-height:10px;font-weight:normal;font-style:normal;color:#e8e8e8;letter-spacing:-0.100px;">Master</div>
<div class="t" style="left:356.50px;top:207.53px;font-size:10px;line-height:10px;font-weight:normal;font-style:normal;color:#d8d8d8;letter-spacing:0.433px;">Hue:</div>
<div class="t" style="left:506.80px;top:207.53px;font-size:10px;line-height:10px;font-weight:normal;font-style:normal;color:#e8e8e8;letter-spacing:0.000px;">0</div>
<div class="t" style="left:357.00px;top:246.23px;font-size:10px;line-height:10px;font-weight:normal;font-style:normal;color:#d8d8d8;letter-spacing:-0.050px;">Saturation:</div>
<div class="t" style="left:506.80px;top:246.13px;font-size:10px;line-height:10px;font-weight:normal;font-style:normal;color:#e8e8e8;letter-spacing:0.150px;">-40</div>
<div class="t" style="left:356.00px;top:284.14px;font-size:10px;line-height:10px;font-weight:normal;font-style:normal;color:#d8d8d8;letter-spacing:0.189px;">Lightness:</div>
<div class="t" style="left:507.60px;top:284.14px;font-size:10px;line-height:10px;font-weight:normal;font-style:normal;color:#e8e8e8;letter-spacing:-0.200px;">+20</div>
<div class="t" style="left:462.00px;top:329.44px;font-size:10px;line-height:10px;font-weight:normal;font-style:normal;color:#e0e0e0;letter-spacing:-0.386px;">Colorize</div>
<div class="t" style="left:620.30px;top:22.26px;font-size:9.5px;line-height:9.5px;font-weight:bold;font-style:normal;color:#f0f0f0;letter-spacing:-0.400px;">Layers</div>
<div class="t" style="left:667.60px;top:22.76px;font-size:9.5px;line-height:9.5px;font-weight:bold;font-style:normal;color:#b4b4b4;letter-spacing:-0.314px;">Channels</div>
<div class="t" style="left:728.40px;top:22.76px;font-size:9.5px;line-height:9.5px;font-weight:bold;font-style:normal;color:#b4b4b4;letter-spacing:-0.350px;">Paths</div>
<div class="t" style="left:636.30px;top:54.44px;font-size:10px;line-height:10px;font-weight:normal;font-style:normal;color:#e6e6e6;letter-spacing:-0.100px;">Kind</div>
<div class="t" style="left:622.40px;top:80.83px;font-size:10px;line-height:10px;font-weight:normal;font-style:normal;color:#e6e6e6;letter-spacing:0.020px;">Normal</div>
<div class="t" style="left:752.90px;top:81.44px;font-size:10px;line-height:10px;font-weight:normal;font-style:normal;color:#d6d6d6;letter-spacing:0.029px;">Opacity:</div>
<div class="t" style="left:797.40px;top:81.44px;font-size:10px;line-height:10px;font-weight:normal;font-style:normal;color:#e6e6e6;letter-spacing:-0.200px;">100%</div>
<div class="t" style="left:616.30px;top:108.13px;font-size:10px;line-height:10px;font-weight:normal;font-style:normal;color:#d6d6d6;letter-spacing:0.250px;">Lock:</div>
<div class="t" style="left:773.70px;top:108.03px;font-size:10px;line-height:10px;font-weight:normal;font-style:normal;color:#d6d6d6;letter-spacing:0.025px;">Fill:</div>
<div class="t" style="left:797.40px;top:108.23px;font-size:10px;line-height:10px;font-weight:normal;font-style:normal;color:#e6e6e6;letter-spacing:-0.200px;">100%</div>
<div class="t" style="left:686.90px;top:144.84px;font-size:10px;line-height:10px;font-weight:normal;font-style:normal;color:#e6e6e6;letter-spacing:0.300px;">Subject</div>
<div class="t" style="left:749.30px;top:183.94px;font-size:10px;line-height:10px;font-weight:normal;font-style:normal;color:#f0f0f0;letter-spacing:0.087px;">BI_Saturation...</div>
<div class="t" style="left:685.70px;top:221.53px;font-size:10px;line-height:10px;font-weight:normal;font-style:normal;color:#e6e6e6;letter-spacing:0.153px;">Background&nbsp;Image</div>
<div class="t" style="left:733.40px;top:261.24px;font-size:10px;line-height:10px;font-weight:normal;font-style:normal;color:#e6e6e6;letter-spacing:-0.047px;">Background&nbsp;Color</div>
<div class="t" style="left:688.40px;top:300.34px;font-size:10px;line-height:10px;font-weight:normal;font-style:italic;color:#e6e6e6;letter-spacing:-0.222px;">Background</div>
<div class="a" style="left:685px;top:230px;width:91px;height:1px;background:#e0e0e0"></div>
</body></html>
